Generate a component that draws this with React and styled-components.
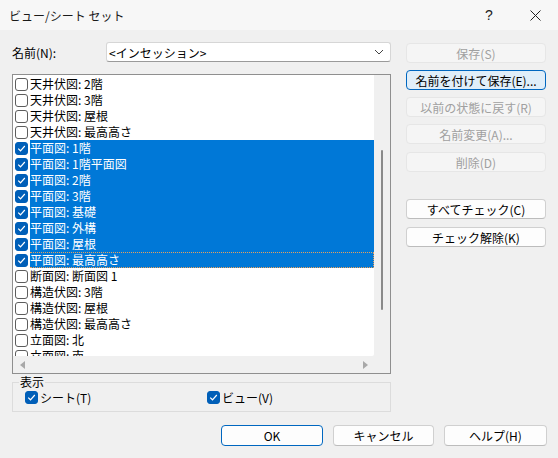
import React from "react";
import styled, { createGlobalStyle } from "styled-components";

const GlobalStyle = createGlobalStyle`
  html, body {
    margin: 0;
    padding: 0;
    background: #f0f0f0;
  }
  body {
    font-family: "Noto Sans CJK JP", "Noto Sans", sans-serif;
    font-size: 12px;
    color: #000;
  }
`;

const Window = styled.div`
  width: 558px;
  height: 458px;
  background: #f0f0f0;
  display: flex;
  flex-direction: column;
  overflow: hidden;
`;

const TitleBar = styled.div`
  height: 30px;
  flex: none;
  background: #f7f7f7;
  display: flex;
  align-items: center;
  padding-left: 9px;
`;

const Title = styled.div`
  flex: 1;
  font-size: 12px;
  color: #1a1a1a;
`;

const TitleButton = styled.div`
  width: 46px;
  height: 30px;
  display: flex;
  align-items: center;
  justify-content: center;
  font-family: "Liberation Sans", sans-serif;
  font-size: 14px;
  color: #222;
`;

const Body = styled.div`
  flex: 1;
  display: flex;
  flex-direction: column;
  padding: 12px 11px 0 12px;
`;

const Main = styled.div`
  display: flex;
  gap: 15px;
`;

const LeftColumn = styled.div`
  width: 379px;
  display: flex;
  flex-direction: column;
`;

const NameRow = styled.div`
  height: 20px;
  display: flex;
  align-items: center;
  margin-bottom: 12px;
`;

const Label = styled.div`
  width: 94px;
`;

const Combo = styled.div`
  flex: 1;
  height: 20px;
  box-sizing: border-box;
  background: #fff;
  border: 1px solid #d6d6d6;
  border-bottom-color: #9a9a9a;
  border-radius: 3px;
  display: flex;
  align-items: center;
  padding: 0 6px 0 2px;
`;

const ComboText = styled.div`
  flex: 1;
`;

const ListBox = styled.div`
  height: 300px;
  box-sizing: border-box;
  border: 1px solid #8f8f8f;
  display: grid;
  grid-template-columns: 1fr 16px;
  grid-template-rows: 1fr 17px;
  background: #f0f0f0;
`;

const Viewport = styled.div`
  background: #fff;
  overflow: hidden;
  padding-top: 1px;
  border-bottom-right-radius: 2px;
`;

const Row = styled.div`
  height: 16px;
  display: flex;
  align-items: center;
  padding-left: 2px;
  white-space: nowrap;
`;

const RowText = styled.div`
  flex: 1;
  height: 16px;
  box-sizing: border-box;
  line-height: 14px;
  margin-left: 2px;
  background: ${(p) => (p.$selected ? "#0078d7" : "transparent")};
  color: ${(p) => (p.$selected ? "#fff" : "#000")};
  border: 1px ${(p) => (p.$focused ? "dotted #e8a05a" : "solid transparent")};
  border-left-width: 0;
`;

const Box = styled.span`
  width: 13px;
  height: 13px;
  box-sizing: border-box;
  flex: none;
  border-radius: 3px;
  border: 1px solid ${(p) => (p.$checked ? "#005fb8" : "#5d5d5d")};
  background: ${(p) => (p.$checked ? "#005fb8" : "#fff")};
  display: flex;
  align-items: center;
  justify-content: center;
`;

const VScroll = styled.div`
  display: flex;
  justify-content: center;
  padding-top: 75px;
`;

const Thumb = styled.div`
  width: 2px;
  height: 160px;
  border-radius: 1px;
  background: #8a8a8a;
`;

const HScroll = styled.div`
  display: flex;
  align-items: center;
  justify-content: space-between;
  padding: 0 6px 0 7px;
`;

const Arrow = styled.span`
  width: 0;
  height: 0;
  border-top: 4px solid transparent;
  border-bottom: 4px solid transparent;
  ${(p) =>
    p.$dir === "left"
      ? "border-right: 5px solid #a8a8a8;"
      : "border-left: 5px solid #a8a8a8;"}
`;

const Corner = styled.div``;

const Group = styled.fieldset`
  margin: 1px 0 0;
  padding: 0 0 6px 12px;
  border: 1px solid #dcdcdc;
  min-width: 0;
`;

const Legend = styled.legend`
  padding: 0 1px;
  margin-left: -6px;
  line-height: 14px;
  font-size: 12px;
`;

const GroupRow = styled.div`
  display: flex;
  height: 16px;
  align-items: center;
`;

const CheckItem = styled.label`
  display: flex;
  align-items: center;
  gap: 2px;
  width: ${(p) => p.$width}px;
`;

const RightColumn = styled.div`
  width: 140px;
  display: flex;
  flex-direction: column;
  padding-top: 1px;
`;

const Button = styled.div`
  height: ${(p) => p.$h || 20}px;
  width: ${(p) => (p.$w ? `${p.$w}px` : "auto")};
  box-sizing: border-box;
  border-radius: 4px;
  display: flex;
  align-items: center;
  justify-content: center;
  margin-top: ${(p) => p.$mt || 0}px;
  background: ${(p) =>
    p.$disabled ? "#f5f5f5" : p.$primary ? "#e0eef9" : "#fdfdfd"};
  border: 1px solid
    ${(p) => (p.$disabled ? "#e6e6e6" : p.$focus ? "#0067c0" : "#d0d0d0")};
  border-bottom-color: ${(p) =>
    p.$disabled ? "#e6e6e6" : p.$focus ? "#0067c0" : "#bcbcbc"};
  color: ${(p) => (p.$disabled ? "#a0a0a0" : "#000")};
  white-space: nowrap;
`;

const Footer = styled.div`
  display: flex;
  justify-content: flex-end;
  gap: 10px;
  margin-top: 13px;
`;

const Check = () => (
  <svg width="9" height="9" viewBox="0 0 9 9">
    <path d="M1.2 4.6 L3.5 6.8 L7.8 2" fill="none" stroke="#fff" strokeWidth="1.2" />
  </svg>
);

const Chevron = () => (
  <svg width="10" height="6" viewBox="0 0 10 6">
    <path d="M1 1 L5 5 L9 1" fill="none" stroke="#444" strokeWidth="1" />
  </svg>
);

const CloseIcon = () => (
  <svg width="11" height="11" viewBox="0 0 11 11">
    <path d="M0.5 0.5 L10.5 10.5 M10.5 0.5 L0.5 10.5" stroke="#222" strokeWidth="1" />
  </svg>
);

const items = [
  ["天井伏図: 2階", false],
  ["天井伏図: 3階", false],
  ["天井伏図: 屋根", false],
  ["天井伏図: 最高高さ", false],
  ["平面図: 1階", true],
  ["平面図: 1階平面図", true],
  ["平面図: 2階", true],
  ["平面図: 3階", true],
  ["平面図: 基礎", true],
  ["平面図: 外構", true],
  ["平面図: 屋根", true],
  ["平面図: 最高高さ", true, true],
  ["断面図: 断面図 1", false],
  ["構造伏図: 3階", false],
  ["構造伏図: 屋根", false],
  ["構造伏図: 最高高さ", false],
  ["立面図: 北", false],
  ["立面図: 南", false],
];

export default function App() {
  return (
    <Window>
      <GlobalStyle />
      <TitleBar>
        <Title>ビュー/シート セット</Title>
        <TitleButton>?</TitleButton>
        <TitleButton>
          <CloseIcon />
        </TitleButton>
      </TitleBar>
      <Body>
        <Main>
          <LeftColumn>
            <NameRow>
              <Label>名前(N):</Label>
              <Combo>
                <ComboText>&lt;インセッション&gt;</ComboText>
                <Chevron />
              </Combo>
            </NameRow>
            <ListBox>
              <Viewport>
                {items.map(([text, checked, focused]) => (
                  <Row key={text}>
                    <Box $checked={checked}>{checked && <Check />}</Box>
                    <RowText $selected={checked} $focused={focused}>
                      {text}
                    </RowText>
                  </Row>
                ))}
              </Viewport>
              <VScroll>
                <Thumb />
              </VScroll>
              <HScroll>
                <Arrow $dir="left" />
                <Arrow $dir="right" />
              </HScroll>
              <Corner />
            </ListBox>
            <Group>
              <Legend>表示</Legend>
              <GroupRow>
                <CheckItem $width={182}>
                  <Box $checked>
                    <Check />
                  </Box>
                  シート(T)
                </CheckItem>
                <CheckItem $width={120}>
                  <Box $checked>
                    <Check />
                  </Box>
                  ビュー(V)
                </CheckItem>
              </GroupRow>
            </Group>
          </LeftColumn>
          <RightColumn>
            <Button $disabled>保存(S)</Button>
            <Button $mt={7} $primary $focus>
              名前を付けて保存(E)...
            </Button>
            <Button $mt={7} $disabled>
              以前の状態に戻す(R)
            </Button>
            <Button $mt={7} $disabled>
              名前変更(A)...
            </Button>
            <Button $mt={8} $disabled>
              削除(D)
            </Button>
            <Button $mt={27}>すべてチェック(C)</Button>
            <Button $mt={8}>チェック解除(K)</Button>
          </RightColumn>
        </Main>
        <Footer>
          <Button $w={102} $h={21} $focus>
            OK
          </Button>
          <Button $w={101} $h={21}>
            キャンセル
          </Button>
          <Button $w={103} $h={21}>
            ヘルプ(H)
          </Button>
        </Footer>
      </Body>
    </Window>
  );
}
